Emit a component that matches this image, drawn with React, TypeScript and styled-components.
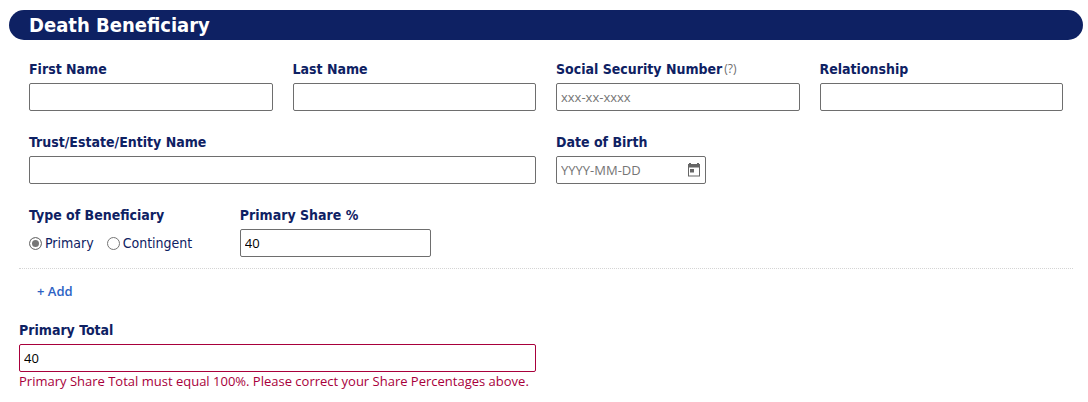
import { useState } from "react";
import styled, { createGlobalStyle, css } from "styled-components";

const navy = "#0e2163";
const grey = "#6e6e6e";
const crimson = "#a8003b";
const labelFont = `Tahoma, "DejaVu Sans Condensed", "Noto Sans", sans-serif`;

const GlobalStyle = createGlobalStyle`
  *, *::before, *::after { box-sizing: border-box; }
  body {
    margin: 0;
    background: #fff;
    color: ${navy};
    font: 13px/18px "Open Sans", "Noto Sans", sans-serif;
  }
`;

const Page = styled.main`
  padding: 10px 5px 10px 9px;
`;

const SectionTitle = styled.h2`
  margin: 0;
  padding: 0 20px;
  border-radius: 15px;
  background: ${navy};
  color: #fff;
  font: 700 20px/30px ${labelFont};
`;

const SectionBody = styled.div`
  padding: 20px 10px 0;
`;

const Entry = styled.div`
  display: flex;
  flex-direction: column;
  gap: 22px;
  padding: 0 10px 11px;
  border-bottom: 1px dotted #d4d4d4;
`;

const Row = styled.div<{ $columns: number }>`
  display: grid;
  grid-template-columns: repeat(${(p) => p.$columns}, minmax(0, 1fr));
  column-gap: 20px;
`;

const fieldLayout = css`
  display: flex;
  flex-direction: column;
  gap: 5px;
  min-width: 0;
`;

const Field = styled.div<{ $span?: number }>`
  ${fieldLayout}
  grid-column: span ${(p) => p.$span ?? 1};
`;

const labelText = css`
  font: 700 14px/18px ${labelFont};
  white-space: nowrap;
`;

const LabelRow = styled.div`
  display: flex;
  gap: 2px;
  height: 18px;
`;

const Label = styled.label`
  ${labelText}
`;

const HelpButton = styled.button`
  padding: 0;
  border: 0;
  background: none;
  color: ${grey};
  font: 12px/16px "Open Sans", sans-serif;
`;

const Input = styled.input`
  width: 100%;
  height: 28px;
  padding: 0 4px;
  border: 1px solid ${grey};
  border-radius: 2px;
  background: #fff;
  color: #000;
  font: 13px/18px "Open Sans", sans-serif;

  &::placeholder {
    color: #757575;
    opacity: 1;
  }

  &[aria-invalid="true"] {
    border-color: ${crimson};
  }
`;

const DateBox = styled.div`
  display: flex;
  align-items: center;
  width: 150px;
  height: 28px;
  padding-right: 4px;
  border: 1px solid ${grey};
  border-radius: 2px;
`;

const DateInput = styled(Input)`
  flex: 1;
  min-width: 0;
  height: 26px;
  border: 0;
`;

const IconButton = styled.button`
  display: flex;
  padding: 0;
  border: 0;
  background: none;
  color: #666;
`;

const RadioGroup = styled.fieldset`
  ${fieldLayout}
  margin: 0;
  padding: 0;
  border: 0;
`;

const Legend = styled.legend`
  ${labelText}
  padding: 0;
  margin-bottom: 5px;
`;

const RadioOptions = styled.div`
  display: flex;
  align-items: center;
  gap: 13px;
  height: 28px;
`;

const RadioLabel = styled.label`
  display: flex;
  align-items: center;
  gap: 3px;
  font: 14px/20px ${labelFont};
`;

const Radio = styled.input`
  appearance: none;
  width: 13px;
  height: 13px;
  margin: 0;
  border: 1px solid #767676;
  border-radius: 50%;
  background: #fff;

  &:checked {
    background: #767676;
    box-shadow: inset 0 0 0 2px #fff;
  }
`;

const AddButton = styled.button`
  display: block;
  margin: 13px 0 21px;
  padding: 0 18px;
  border: 0;
  background: none;
  color: #2c62c4;
  font: 600 13px/18px "Open Sans", sans-serif;
`;

const ErrorText = styled.p`
  margin: 0;
  color: ${crimson};
`;

const TotalBox = styled.div`
  display: flex;
  flex-direction: column;
`;

function CalendarIcon() {
  return (
    <svg width="14" height="14" viewBox="0 0 14 14" aria-hidden="true">
      <path
        fill="currentColor"
        fillRule="evenodd"
        d="M2 0h2v1h6V0h2v1h1v12.500H1V1h1zM2 4.500v8h10v-8zM3 6h4v3.500H3z"
      />
    </svg>
  );
}

type TextFieldProps = {
  id: string;
  label: string;
  span?: number;
  placeholder?: string;
  defaultValue?: string;
  help?: string;
};

function TextField({ id, label, span, placeholder, defaultValue, help }: TextFieldProps) {
  return (
    <Field $span={span}>
      <LabelRow>
        <Label htmlFor={id}>{label}</Label>
        {help && (
          <HelpButton type="button" aria-label={help}>
            (?)
          </HelpButton>
        )}
      </LabelRow>
      <Input id={id} placeholder={placeholder} defaultValue={defaultValue} />
    </Field>
  );
}

export default function App() {
  const [kind, setKind] = useState("Primary");

  return (
    <>
      <GlobalStyle />
      <Page>
        <SectionTitle>Death Beneficiary</SectionTitle>
        <SectionBody>
          <Entry>
            <Row $columns={4}>
              <TextField id="first-name" label="First Name" />
              <TextField id="last-name" label="Last Name" />
              <TextField
                id="ssn"
                label="Social Security Number"
                placeholder="xxx-xx-xxxx"
                help="About the Social Security Number"
              />
              <TextField id="relationship" label="Relationship" />
            </Row>
            <Row $columns={4}>
              <TextField id="entity" label="Trust/Estate/Entity Name" span={2} />
              <Field>
                <Label htmlFor="birth">Date of Birth</Label>
                <DateBox>
                  <DateInput id="birth" placeholder="YYYY-MM-DD" />
                  <IconButton type="button" aria-label="Open calendar">
                    <CalendarIcon />
                  </IconButton>
                </DateBox>
              </Field>
            </Row>
            <Row $columns={5}>
              <RadioGroup>
                <Legend>Type of Beneficiary</Legend>
                <RadioOptions>
                  {["Primary", "Contingent"].map((option) => (
                    <RadioLabel key={option}>
                      <Radio
                        type="radio"
                        name="kind"
                        checked={kind === option}
                        onChange={() => setKind(option)}
                      />
                      {option}
                    </RadioLabel>
                  ))}
                </RadioOptions>
              </RadioGroup>
              <TextField id="share" label="Primary Share %" defaultValue="40" />
            </Row>
          </Entry>
          <AddButton type="button">+ Add</AddButton>
          <Row $columns={2}>
            <TotalBox>
              <Field>
                <Label htmlFor="total">Primary Total</Label>
                <Input id="total" aria-invalid="true" aria-describedby="total-error" defaultValue="40" />
              </Field>
              <ErrorText id="total-error">
                Primary Share Total must equal 100%. Please correct your Share Percentages above.
              </ErrorText>
            </TotalBox>
          </Row>
        </SectionBody>
      </Page>
    </>
  );
}
